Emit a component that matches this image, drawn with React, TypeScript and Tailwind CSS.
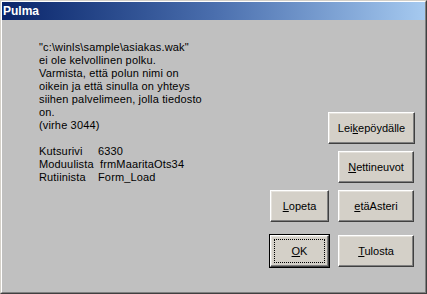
import type { ReactNode } from "react";

const font = { fontFamily: '"Liberation Sans", Arial, sans-serif' };

type BtnProps = {
  children: ReactNode;
  w: string;
  isDefault?: boolean;
};

function WinButton({ children, w, isDefault }: BtnProps) {
  const face = (
    <div className="h-full w-full border border-t-white border-l-white border-r-[#404040] border-b-[#404040] bg-[#d4d0c8] shadow-[inset_-1px_-1px_#808080,inset_1px_1px_#e4e1db] flex items-center justify-center text-[11px] text-black">
      {isDefault ? (
        <div className="flex h-[calc(100%-6px)] w-[calc(100%-6px)] items-center justify-center border border-dotted border-black">
          {children}
        </div>
      ) : (
        children
      )}
    </div>
  );

  if (isDefault) {
    return <div className={`${w} h-[34px] border border-black`}>{face}</div>;
  }
  return <div className={`${w} h-[32px]`}>{face}</div>;
}

const lines = [
  '"c:\\winls\\sample\\asiakas.wak"',
  "ei ole kelvollinen polku.",
  "Varmista, että polun nimi on",
  "oikein ja että sinulla on yhteys",
  "siihen palvelimeen, jolla tiedosto",
  "on.",
  "(virhe 3044)",
];

export default function App() {
  return (
    <div
      className="w-[427px] h-[294px] overflow-hidden border border-t-[#d4d0c8] border-l-[#d4d0c8] border-r-[#404040] border-b-[#404040]"
      style={font}
    >
      <div className="flex h-full flex-col border border-t-white border-l-white border-r-[#808080] border-b-[#808080] bg-[#c0c0c0]">
        {/* title bar */}
        <div className="flex h-[18px] shrink-0 items-center bg-linear-to-r from-[#0a246a] via-[#4a6ead] to-[#a6caf0] pl-[1px] text-[12px] font-bold text-white">
          Pulma
        </div>

        {/* body */}
        <div className="flex flex-1">
          {/* message */}
          <div className="pl-[37px] pt-[21px] text-[11px] leading-[13px] tracking-[0.15px] text-black">
            {lines.map((l) => (
              <div key={l} className="whitespace-nowrap">
                {l}
              </div>
            ))}
            <div className="h-[13px]" />
            <div className="flex whitespace-nowrap">
              <span className="min-w-[59px]">Kutsurivi</span>
              <span>6330</span>
            </div>
            <div className="flex whitespace-nowrap">
              <span className="min-w-[59px]">Moduulista</span>
              <span className="ml-[2px]">frmMaaritaOts34</span>
            </div>
            <div className="flex whitespace-nowrap">
              <span className="min-w-[59px]">Rutiinista</span>
              <span>Form_Load</span>
            </div>
          </div>

          {/* buttons */}
          <div className="ml-auto flex flex-col items-end pr-[10px] pt-[92px]">
            <WinButton w="w-[87px]">
              <span>
                Lei<u>k</u>epöydälle
              </span>
            </WinButton>
            <div className="mr-px mt-[7px]">
              <WinButton w="w-[76px]">
                <span>
                  <u>N</u>ettineuvot
                </span>
              </WinButton>
            </div>
            <div className="mr-px mt-[7px] flex gap-[9px]">
              <WinButton w="w-[59px]">
                <span>
                  <u>L</u>opeta
                </span>
              </WinButton>
              <WinButton w="w-[76px]">
                <span>
                  <u>e</u>täAsteri
                </span>
              </WinButton>
            </div>
            <div className="mr-px mt-[12px] flex items-start gap-[8px]">
              <WinButton w="w-[61px]" isDefault>
                <span>
                  <u>O</u>K
                </span>
              </WinButton>
              <div className="mt-px">
                <WinButton w="w-[76px]">
                  <span>
                    <u>T</u>ulosta
                  </span>
                </WinButton>
              </div>
            </div>
          </div>
        </div>
      </div>
    </div>
  );
}
